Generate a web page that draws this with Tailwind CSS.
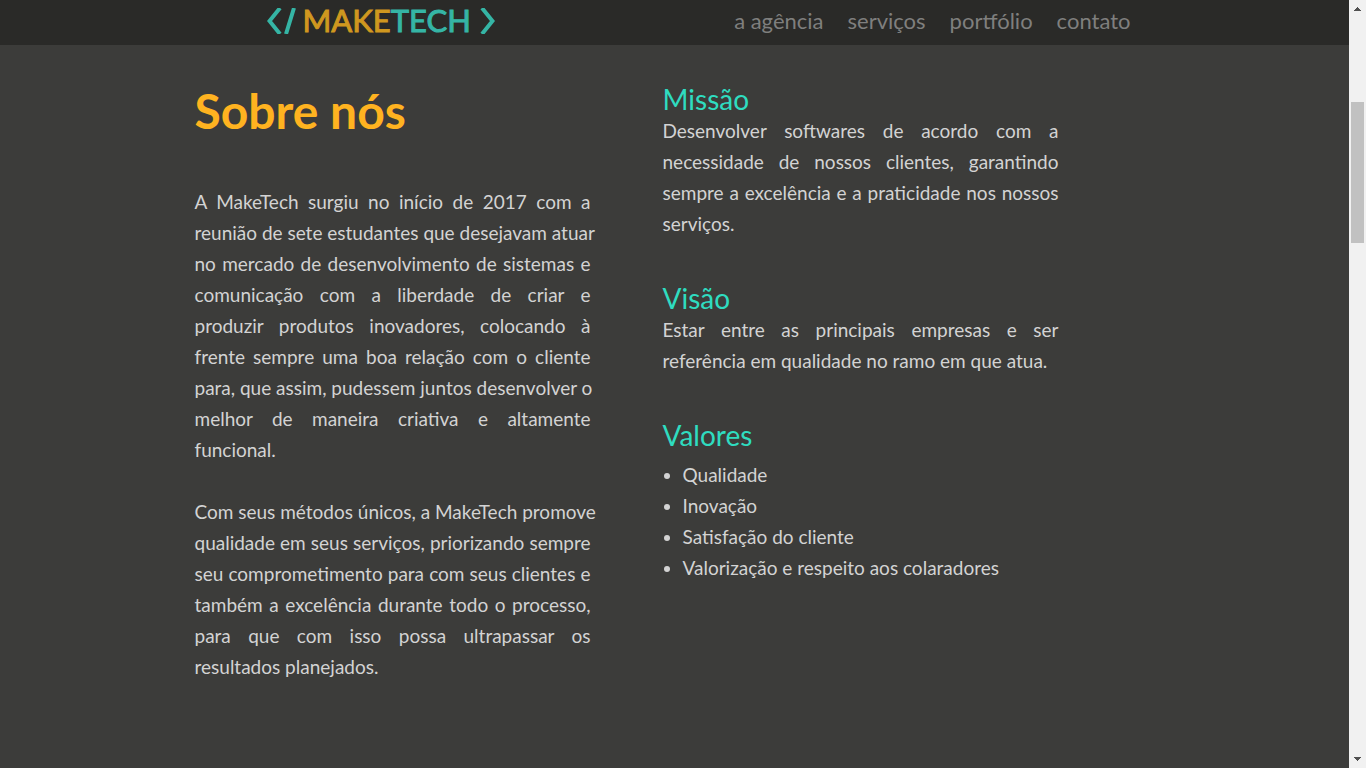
<!DOCTYPE html>
<html lang="pt-BR">
<head>
<meta charset="utf-8">
<meta name="viewport" content="width=device-width, initial-scale=1">
<title>MakeTech</title>
<script src="https://cdn.jsdelivr.net/npm/@tailwindcss/browser@4"></script>
</head>
<body class="flex h-screen overflow-hidden bg-[#3c3c3a] font-['Lato',sans-serif] text-[#d3d3d3]">
  <div class="flex min-w-0 flex-1 flex-col">
    <header class="h-[45px] shrink-0 bg-[#2a2a28]">
      <div class="mx-auto flex h-full max-w-[960px] items-center justify-between pr-6 pl-18 pb-1">
        <a href="#" class="flex items-center text-[31px] leading-none text-[#35b5a5]" aria-label="MakeTech">
          <svg class="h-[26px] w-9" viewBox="0 0 36 26" fill="none" stroke="currentColor" stroke-width="4" aria-hidden="true"><path d="M13 0 2.500 13 13 26M27 0 19 26"/></svg>
          <span class="text-[#d0981f] [-webkit-text-stroke:1px_currentColor]">MAKE</span><span class="[-webkit-text-stroke:1px_currentColor]">TECH</span>
          <svg class="ml-2 h-[26px] w-4" viewBox="0 0 16 26" fill="none" stroke="currentColor" stroke-width="4" aria-hidden="true"><path d="M3 0 13.500 13 3 26"/></svg>
        </a>
        <nav class="flex gap-6 text-[22px] leading-none text-[#7f7f7e]">
          <a href="#agencia">a agência</a>
          <a href="#servicos">serviços</a>
          <a href="#portfolio">portfólio</a>
          <a href="#contato">contato</a>
        </nav>
      </div>
    </header>
    <main class="mx-auto grid w-full max-w-[960px] grid-cols-2 gap-x-18 pt-[38px] pr-24 text-[19px] leading-[31px]">
      <section>
        <h1 class="text-5xl leading-[55px] font-bold text-[#ffb320]">Sobre nós</h1>
        <p class="mt-12 whitespace-nowrap text-justify">
          <span class="block [text-align-last:justify]">A MakeTech surgiu no início de 2017 com a </span>
          <span class="block [text-align-last:justify]">reunião de sete estudantes que desejavam atuar </span>
          <span class="block [text-align-last:justify]">no mercado de desenvolvimento de sistemas e </span>
          <span class="block [text-align-last:justify]">comunicação com a liberdade de criar e </span>
          <span class="block [text-align-last:justify]">produzir produtos inovadores, colocando à </span>
          <span class="block [text-align-last:justify]">frente sempre uma boa relação com o cliente </span>
          <span class="block [text-align-last:justify]">para, que assim, pudessem juntos desenvolver o </span>
          <span class="block [text-align-last:justify]">melhor de maneira criativa e altamente </span>
          <span class="block">funcional.</span>
        </p>
        <p class="mt-[31px] whitespace-nowrap text-justify">
          <span class="block [text-align-last:justify]">Com seus métodos únicos, a MakeTech promove </span>
          <span class="block [text-align-last:justify]">qualidade em seus serviços, priorizando sempre </span>
          <span class="block [text-align-last:justify]">seu comprometimento para com seus clientes e </span>
          <span class="block [text-align-last:justify]">também a excelência durante todo o processo, </span>
          <span class="block [text-align-last:justify]">para que com isso possa ultrapassar os </span>
          <span class="block">resultados planejados.</span>
        </p>
      </section>
      <div>
        <h2 class="text-[28px] leading-8 text-[#2fdcc0]">Missão</h2>
        <p class="text-justify">Desenvolver softwares de acordo com a necessidade de nossos clientes, garantindo sempre a excelência e a praticidade nos nossos serviços.</p>
        <h2 class="mt-[43px] text-[28px] leading-8 text-[#2fdcc0]">Visão</h2>
        <p class="text-justify">Estar entre as principais empresas e ser referência em qualidade no ramo em que atua.</p>
        <h2 class="mt-[43px] text-[28px] leading-8 text-[#2fdcc0]">Valores</h2>
        <ul class="mt-2 list-disc pl-5">
          <li>Qualidade</li>
          <li>Inovação</li>
          <li>Satisfação do cliente</li>
          <li>Valorização e respeito aos colaradores</li>
        </ul>
      </div>
    </main>
  </div>
  <div class="flex w-[17px] shrink-0 flex-col items-center bg-[#f1f1f1] py-1" aria-hidden="true">
    <svg class="mt-[3px] h-1 w-[7px] fill-[#505050]" viewBox="0 0 7 4"><path d="M3 0h1v1h1v1h1v1h1v1H0V3h1V2h1V1h1z"/></svg>
    <div class="mt-[91px] h-[141px] w-[13px] bg-[#c1c1c1]"></div>
    <svg class="mt-auto mb-[3px] h-1 w-[7px] fill-[#505050]" viewBox="0 0 7 4"><path d="M0 0h7v1H6v1H5v1H4v1H3V3H2V2H1V1H0z"/></svg>
  </div>
</body>
</html>
